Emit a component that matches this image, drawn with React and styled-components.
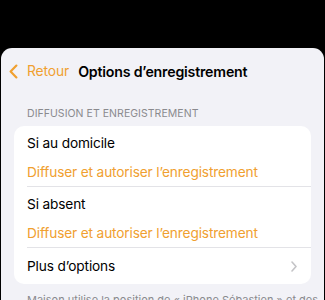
import React from "react";
import styled, { createGlobalStyle } from "styled-components";

const Global = createGlobalStyle`
  html, body { margin: 0; padding: 0; background: #000; }
  body { font-family: Inter, "Noto Sans", sans-serif; -webkit-font-smoothing: antialiased; }
`;

const Screen = styled.div`
  width: 325px;
  height: 300px;
  background: #000;
  padding-top: 48px;
  box-sizing: border-box;
  overflow: hidden;
`;

const Sheet = styled.div`
  margin: 0 1px;
  height: 100%;
  background: #f2f2f7;
  border-radius: 11px 11px 0 0;
`;

const NavBar = styled.div`
  display: flex;
  align-items: center;
  height: 46px;
  padding-left: 8px;
`;

const Back = styled.div`
  display: flex;
  align-items: center;
  gap: 9px;
  color: #f0a030;
  font-size: 13.8px;
  letter-spacing: -0.1px;
`;

const Title = styled.div`
  margin-left: 9px;
  font-size: 14.2px;
  font-weight: 600;
  color: #000;
  letter-spacing: -0.2px;
`;

const SectionHeader = styled.div`
  margin: 13px 0 0 26px;
  height: 19px;
  font-size: 10.5px;
  color: #8a8a8e;
  letter-spacing: 0.05px;
`;

const Card = styled.div`
  margin: 0 13px;
  background: #fff;
  border-radius: 10px;
  overflow: hidden;
`;

const Group = styled.div`
  margin-left: 13px;
  padding-top: 2px;
  border-bottom: 1px solid #e3e3e7;
`;

const Line = styled.div`
  height: 29px;
  display: flex;
  align-items: center;
  font-size: 13.7px;
  letter-spacing: -0.15px;
  color: ${(p) => (p.$accent ? "#f0a030" : "#000")};
`;

const LinkRow = styled.div`
  margin-left: 13px;
  height: 36px;
  display: flex;
  align-items: center;
  justify-content: space-between;
  padding-right: 14px;
  font-size: 13.7px;
  letter-spacing: -0.15px;
  color: #000;
`;

const Footer = styled.div`
  margin: 9px 13px 0 26px;
  font-size: 11px;
  color: #8a8a8e;
  white-space: nowrap;
`;

const Chevron = ({ color, w, h, sw }) => (
  <svg width={w} height={h} viewBox={`0 0 ${w} ${h}`} fill="none">
    <path
      d={`M${w - sw / 2 - 0.5} ${sw / 2 + 0.5} L${sw / 2 + 0.5} ${h / 2} L${w - sw / 2 - 0.5} ${h - sw / 2 - 0.5}`}
      stroke={color}
      strokeWidth={sw}
      strokeLinecap="round"
      strokeLinejoin="round"
    />
  </svg>
);

const Disclosure = () => (
  <svg width="6" height="11" viewBox="0 0 6 11" fill="none">
    <path d="M1 1 L5 5.5 L1 10" stroke="#c4c4c7" strokeWidth="1.6" strokeLinecap="round" strokeLinejoin="round" />
  </svg>
);

export default function App() {
  return (
    <>
      <Global />
      <Screen>
        <Sheet>
          <NavBar>
            <Back>
              <Chevron color="#f0a030" w={9} h={15} sw={2.2} />
              <span>Retour</span>
            </Back>
            <Title>Options d’enregistrement</Title>
          </NavBar>
          <SectionHeader>DIFFUSION ET ENREGISTREMENT</SectionHeader>
          <Card>
            <Group>
              <Line>Si au domicile</Line>
              <Line $accent>Diffuser et autoriser l’enregistrement</Line>
            </Group>
            <Group>
              <Line>Si absent</Line>
              <Line $accent>Diffuser et autoriser l’enregistrement</Line>
            </Group>
            <LinkRow>
              <span>Plus d’options</span>
              <Disclosure />
            </LinkRow>
          </Card>
          <Footer>Maison utilise la position de « iPhone Sébastien » et des</Footer>
        </Sheet>
      </Screen>
    </>
  );
}
